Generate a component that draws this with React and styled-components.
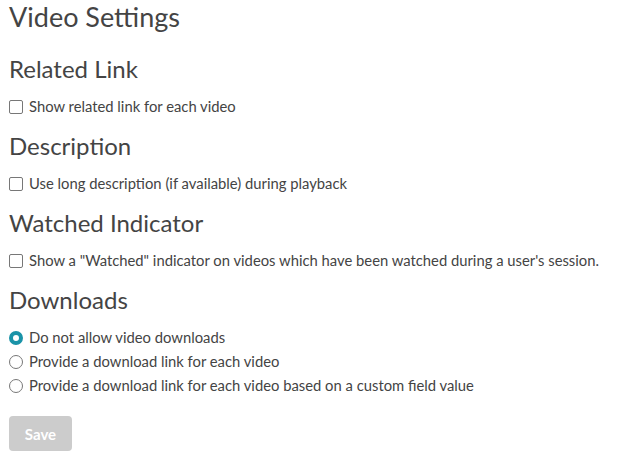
import React, { useState } from "react";
import styled, { createGlobalStyle } from "styled-components";

const GlobalStyle = createGlobalStyle`
  body {
    margin: 0;
    background: #fff;
    font-family: Lato, "Open Sans", sans-serif;
    color: #444;
  }
`;

const Page = styled.div`
  padding: 0 9px;
`;

const Title = styled.h1`
  font-size: 27px;
  font-weight: 400;
  line-height: 34px;
  margin: 0 0 20px;
  color: #444;
`;

const Section = styled.section`
  margin-bottom: 13px;
`;

const SectionTitle = styled.h2`
  font-size: 24px;
  font-weight: 400;
  line-height: 30px;
  margin: 0 0 10px;
  color: #444;
`;

const Option = styled.label`
  display: flex;
  align-items: center;
  gap: 6px;
  font-size: 14.8px;
  line-height: 24px;
  cursor: pointer;
`;

const Box = styled.span`
  width: 14px;
  height: 14px;
  margin-top: 2px;
  box-sizing: border-box;
  border: 1px solid #777;
  border-radius: ${(p) => (p.$round ? "50%" : "2px")};
  background: #fff;
  flex: none;
  ${(p) =>
    p.$checked &&
    `
    border: 4px solid #1a93a8;
  `}
`;

const SaveButton = styled.button`
  margin-top: 6px;
  width: 63px;
  height: 35px;
  border: none;
  border-radius: 4px;
  background: #cccccc;
  color: #fff;
  font-family: Lato, sans-serif;
  font-size: 15px;
  font-weight: 700;
`;

const checks = [
  { title: "Related Link", label: "Show related link for each video" },
  { title: "Description", label: "Use long description (if available) during playback" },
  {
    title: "Watched Indicator",
    label: 'Show a "Watched" indicator on videos which have been watched during a user\'s session.',
  },
];

const downloads = [
  "Do not allow video downloads",
  "Provide a download link for each video",
  "Provide a download link for each video based on a custom field value",
];

export default function App() {
  const [dl, setDl] = useState(0);
  return (
    <Page>
      <GlobalStyle />
      <Title>Video Settings</Title>
      {checks.map((c) => (
        <Section key={c.title}>
          <SectionTitle>{c.title}</SectionTitle>
          <Option>
            <Box />
            {c.label}
          </Option>
        </Section>
      ))}
      <Section>
        <SectionTitle>Downloads</SectionTitle>
        {downloads.map((d, i) => (
          <Option key={d} onClick={() => setDl(i)}>
            <Box $round $checked={dl === i} />
            {d}
          </Option>
        ))}
      </Section>
      <SaveButton disabled>Save</SaveButton>
    </Page>
  );
}
